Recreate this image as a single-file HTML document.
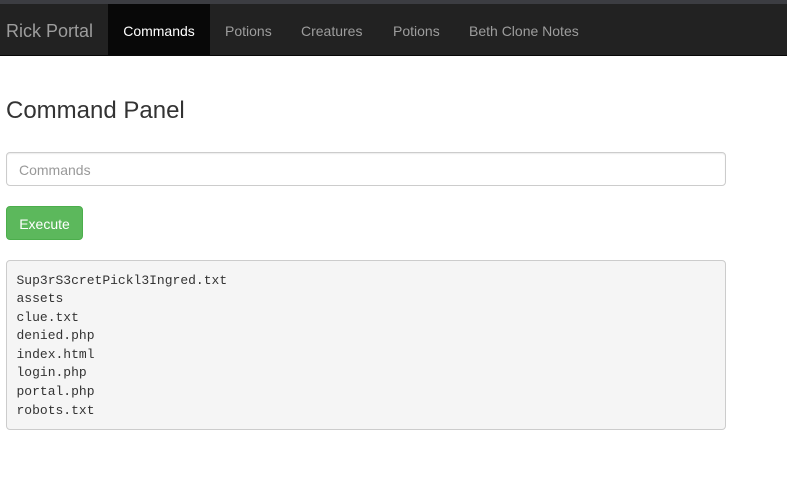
<!DOCTYPE html>
<html><head><style>
body{margin:0;background:#fff;font-family:"Liberation Sans",sans-serif;font-size:14px;color:#333;}
.top{height:4px;background:#3c3d42;}
.nav{height:51px;background:#222;border-bottom:1px solid #080808;position:relative;}
.nav a{position:absolute;top:0;height:51px;line-height:55px;color:#9d9d9d;text-decoration:none;font-size:14px;}
.brand{left:6px;font-size:18px !important;}
.act{background:#080808;color:#fff !important;left:108px;width:102px;text-align:center;}
h1{position:absolute;left:6px;top:97px;margin:0;font-size:24px;font-weight:400;color:#333;}
.inp{position:absolute;left:6px;top:152px;width:718px;height:32px;border:1px solid #ccc;border-radius:4px;box-shadow:inset 0 1px 1px rgba(0,0,0,.075);}
.inp span{position:absolute;left:12px;top:9px;color:#999;}
.btn{position:absolute;left:6px;top:206px;width:75px;height:32px;background:#5cb85c;border:1px solid #4cae4c;border-radius:4px;color:#fff;line-height:34px;text-align:center;}
pre{position:absolute;left:6px;top:260px;width:699px;height:148px;margin:0;padding:10.5px 9.5px 9.5px;background:#f5f5f5;border:1px solid #ccc;border-radius:4px;font-family:"Liberation Mono",monospace;font-size:13px;line-height:18.6px;color:#333;}
</style></head><body>
<div class="top"></div>
<div class="nav">
<a class="brand">Rick Portal</a>
<a class="act">Commands</a>
<a style="left:225px">Potions</a>
<a style="left:301px">Creatures</a>
<a style="left:393px">Potions</a>
<a style="left:469px">Beth Clone Notes</a>
</div>
<h1>Command Panel</h1>
<div class="inp"><span>Commands</span></div>
<div class="btn">Execute</div>
<pre>Sup3rS3cretPickl3Ingred.txt
assets
clue.txt
denied.php
index.html
login.php
portal.php
robots.txt</pre>
</body></html>
